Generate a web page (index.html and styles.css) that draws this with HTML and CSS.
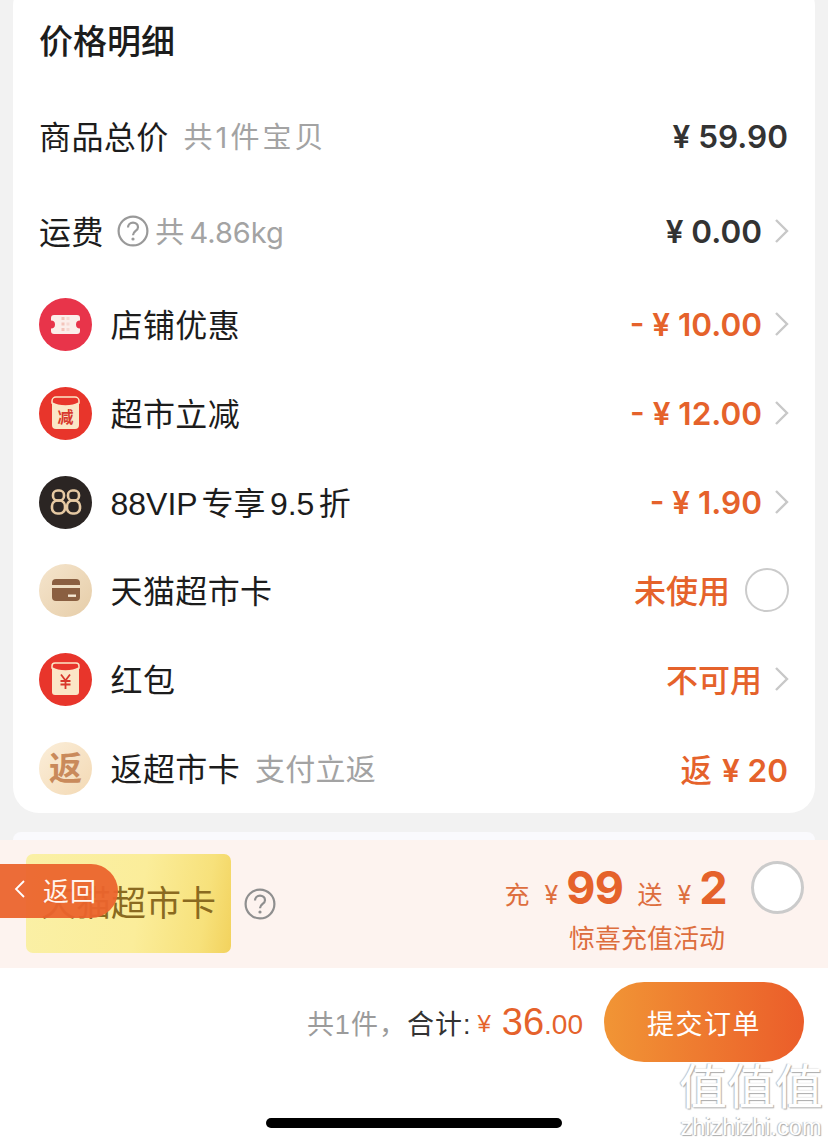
FILE: index.html
```html
<!DOCTYPE html>
<html lang="zh">
<head>
<meta charset="utf-8">
<title>价格明细</title>
<link rel="stylesheet" href="styles.css">
</head>
<body>
<div class="page">
  <section class="card">
    <h2 class="title">价格明细</h2>
    <div class="row row-plain r1">
      <div class="left"><span class="label">商品总价</span><span class="note n1">共1件宝贝</span></div>
      <div class="right"><span class="price dark">¥ 59.90</span></div>
    </div>
    <div class="row row-plain r2">
      <div class="left"><span class="label">运费</span>
        <svg class="help" viewBox="0 0 32 32"><circle cx="16" cy="16" r="14.4" fill="none" stroke="#999" stroke-width="2.2"/><path d="M11 12.6c0-3 2.2-5 5-5s5 2 5 4.6c0 3.8-5 3.8-5 8" fill="none" stroke="#999" stroke-width="2.2"/><circle cx="16" cy="24" r="1.6" fill="#999"/></svg>
        <span class="note n2">共 4.86kg</span></div>
      <div class="right"><span class="price dark">¥ 0.00</span><svg class="chev" viewBox="0 0 16 26"><path d="M2 2l11 11L2 24" fill="none" stroke="#c8c8c8" stroke-width="2.4"/></svg></div>
    </div>
    <div class="row r3">
      <div class="left">
        <svg class="icon" viewBox="0 0 53 53"><circle cx="26.5" cy="26.5" r="26.5" fill="#e8344a"/><path d="M15 17h23a3 3 0 0 1 3 3v2.500a4 4 0 0 0 0 8V33a3 3 0 0 1-3 3H15a3 3 0 0 1-3-3v-2.500a4 4 0 0 0 0-8V20a3 3 0 0 1 3-3z" fill="#fbeeea"/><path d="M24 19v15" stroke="#f3c4ba" stroke-width="3" stroke-dasharray="3 2.500"/><path d="M29 19v15" stroke="#f6d8d2" stroke-width="3" stroke-dasharray="3 2.500"/></svg>
        <span class="label lg">店铺优惠</span></div>
      <div class="right"><span class="price orange">- ¥ 10.00</span><svg class="chev" viewBox="0 0 16 26"><path d="M2 2l11 11L2 24" fill="none" stroke="#c8c8c8" stroke-width="2.4"/></svg></div>
    </div>
    <div class="row r4">
      <div class="left">
        <svg class="icon" viewBox="0 0 53 53"><circle cx="26.5" cy="26.5" r="26.5" fill="#e8352b"/><rect x="13" y="10" width="27" height="32" rx="4" fill="#fbe6c6"/><path d="M13 14a4 4 0 0 1 4-4h19a4 4 0 0 1 4 4v2c-7 4-20 4-27 0z" fill="#e8352b" stroke="#fbe6c6" stroke-width="1.500"/><text x="26.500" y="36" class="jian">减</text></svg>
        <span class="label lg">超市立减</span></div>
      <div class="right"><span class="price orange">- ¥ 12.00</span><svg class="chev" viewBox="0 0 16 26"><path d="M2 2l11 11L2 24" fill="none" stroke="#c8c8c8" stroke-width="2.4"/></svg></div>
    </div>
    <div class="row r5">
      <div class="left">
        <svg class="icon" viewBox="0 0 53 53"><circle cx="26.5" cy="26.5" r="26.5" fill="#2b2523"/><g fill="none" stroke="#e6c9a2" stroke-width="2.600"><rect x="14" y="14.500" width="11" height="10" rx="4.500"/><rect x="13" y="24.500" width="13" height="13" rx="5.500"/><rect x="29" y="14.500" width="11" height="10" rx="4.500"/><rect x="28" y="24.500" width="13" height="13" rx="5.500"/></g></svg>
        <span class="label lg lg-vip">88VIP 专享 9.5 折</span></div>
      <div class="right"><span class="price orange">- ¥ 1.90</span><svg class="chev" viewBox="0 0 16 26"><path d="M2 2l11 11L2 24" fill="none" stroke="#c8c8c8" stroke-width="2.4"/></svg></div>
    </div>
    <div class="row r6">
      <div class="left">
        <svg class="icon" viewBox="0 0 53 53"><defs><linearGradient id="g1" x1="0" y1="0" x2="1" y2="1"><stop offset="0" stop-color="#f5e5cd"/><stop offset="1" stop-color="#e6cda8"/></linearGradient><linearGradient id="g2" x1="0" y1="0" x2="1" y2="1"><stop offset="0" stop-color="#fbeed9"/><stop offset="1" stop-color="#f3d9b4"/></linearGradient></defs><circle cx="26.5" cy="26.5" r="26.5" fill="url(#g1)"/><rect x="13" y="15" width="28" height="22" rx="4" fill="#8a5f41"/><rect x="13" y="21" width="28" height="3" fill="#f0dfc4"/><rect x="29" y="30.500" width="8" height="2.400" fill="#f5e8d4"/></svg>
        <span class="label lg">天猫超市卡</span></div>
      <div class="right"><span class="status">未使用</span><span class="radio radio-card"></span></div>
    </div>
    <div class="row r7">
      <div class="left">
        <svg class="icon" viewBox="0 0 53 53"><circle cx="26.5" cy="26.5" r="26.5" fill="#e8352b"/><rect x="13" y="10" width="27" height="32" rx="3" fill="#fbe6c6"/><path d="M13 13a3 3 0 0 1 3-3h21a3 3 0 0 1 3 3v2c-7 4-20 4-27 0z" fill="#e8352b" stroke="#fbe6c6" stroke-width="1.500"/><path d="M22 21.500l4.500 6 4.500-6M21.500 28h10M21.500 31.500h10M26.500 27.500V36" fill="none" stroke="#d8382c" stroke-width="1.800"/></svg>
        <span class="label lg">红包</span></div>
      <div class="right"><span class="status">不可用</span><svg class="chev" viewBox="0 0 16 26"><path d="M2 2l11 11L2 24" fill="none" stroke="#c8c8c8" stroke-width="2.4"/></svg></div>
    </div>
    <div class="row r8">
      <div class="left">
        <svg class="icon" viewBox="0 0 53 53"><circle cx="26.5" cy="26.5" r="26.5" fill="url(#g2)"/><text x="26.500" y="38" class="fan">返</text></svg>
        <span class="label lg">返超市卡</span><span class="note n3">支付立返</span></div>
      <div class="right"><span class="price orange"><span class="fan-word">返</span> ¥ 20</span></div>
    </div>
  </section>

  <div class="second-card"></div>

  <section class="banner">
    <div class="gold"><span class="gold-text">天猫超市卡</span></div>
    <svg class="help help-b" viewBox="0 0 32 32"><circle cx="16" cy="16" r="14.400" fill="none" stroke="#8f8f8f" stroke-width="2.200"/><path d="M11 12.600c0-3 2.200-5 5-5s5 2 5 4.600c0 3.800-5 3.800-5 8" fill="none" stroke="#8f8f8f" stroke-width="2.200"/><circle cx="16" cy="24" r="1.600" fill="#8f8f8f"/></svg>
    <div class="offer">
      <div class="offer-main"><span class="small">充</span><span class="small yen">¥</span><b class="big">99</b><span class="small song">送</span><span class="small yen">¥</span><b class="big">2</b></div>
      <div class="offer-sub">惊喜充值活动</div>
    </div>
    <span class="radio radio-b"></span>
  </section>

  <footer class="footer">
    <div class="sum">
      <span class="count">共1件，</span><span class="total">合计:</span><span class="yen-s">¥</span><span class="int">36</span><span class="dec">.00</span>
      <button class="submit">提交订单</button>
    </div>
    <div class="home"></div>
  </footer>

  <div class="back"><svg class="back-arrow" viewBox="0 0 12 20"><path d="M10 2L2 10l8 8" fill="none" stroke="#fff" stroke-width="1.800"/></svg><span>返回</span></div>
  <div class="mark"><div class="mark-cn">值值值</div><div class="mark-en">zhizhizhi.com</div></div>
</div>
</body>
</html>
```
FILE: styles.css
```css
* { box-sizing: border-box; }
html, body { margin: 0; padding: 0; }
body { width: 828px; height: 1144px; overflow: hidden; background: #f2f2f2; font-family: "Liberation Sans", "Noto Sans CJK SC", sans-serif; color: #1c1c1c; }
.page { position: relative; width: 828px; height: 1144px; overflow: hidden; }

.card { margin: -20px 13px 0; height: 833px; background: #fff; border-radius: 26px; padding: 38px 27px 0 26px; }
.title { margin: 0; font-size: 34px; line-height: 48px; font-weight: 500; height: 50px; }
.row { display: flex; align-items: center; justify-content: space-between; height: 54px; }
.r1 { margin-top: 41px; }
.r2 { margin-top: 41px; }
.r3 { margin-top: 39px; }
.r4, .r5, .r7, .r8 { margin-top: 35px; }
.r6 { margin-top: 34px; }
.left { display: flex; align-items: center; }
.right { display: flex; align-items: center; }
.label { font-size: 32px; letter-spacing: .4px; white-space: nowrap; margin-bottom: 2px; }
.label.lg { margin-left: 18.500px; }
.label.lg-vip { letter-spacing: 0; word-spacing: -4.500px; }
.note { color: #a3a3a3; font-family: "Inter", "Noto Sans CJK SC", sans-serif; font-size: 29px; letter-spacing: 3px; white-space: nowrap; margin-bottom: 2px; }
.n1 { margin-left: 15px; }
.n2 { margin-left: 6px; letter-spacing: 0; word-spacing: -3px; }
.n3 { margin-left: 15px; font-size: 30px; letter-spacing: .2px; }
.help { width: 32px; height: 32px; margin-left: 13.500px; }
.icon { width: 53px; height: 53px; flex: none; }
.price { font-family: "Inter", "Noto Sans CJK SC", sans-serif; font-size: 31.500px; font-weight: 600; white-space: nowrap; }
.fan-word { font-weight: 500; margin-right: 2px; }
.dark { color: #333; }
.orange { color: #e5622b; }
.status { color: #e5622b; font-size: 32px; font-weight: 500; margin-bottom: 2px; }
.chev { width: 16px; height: 26px; margin-left: 12px; margin-right: -2px; }
.radio { display: block; width: 44px; height: 44px; margin-left: 15px; border-radius: 50%; border: 2px solid #cbcbcb; background: #fff; }
.radio-card { margin-right: -1px; }
.jian { font-family: "Noto Sans CJK SC", sans-serif; font-size: 16px; font-weight: 700; fill: #d8382c; text-anchor: middle; }
.fan { font-family: "Noto Sans CJK SC", sans-serif; font-size: 33px; font-weight: 700; fill: #c98a5b; text-anchor: middle; }

.second-card { position: relative; margin: 19px 13px 0; height: 8px; background: #fafafd; border-radius: 20px 20px 0 0; }
.banner { display: flex; align-items: center; height: 128px; background: #fdf3ef; padding: 14px 24px 15px 26px; }
.gold { width: 205px; height: 99px; border-radius: 7px; background: linear-gradient(100deg, #faf0a6 0%, #fbed9a 55%, #f7e17b 85%, #f2d25d 100%); display: flex; align-items: center; justify-content: flex-end; padding: 0 15px 6px 0; }
.gold-text { color: #8a6a20; font-size: 35px; white-space: nowrap; }
.help-b { margin-left: 13px; }
.offer { margin-left: auto; display: flex; flex-direction: column; align-items: flex-end; color: #e5622b; margin-top: 8px; }
.offer-main { display: flex; align-items: baseline; height: 54px; white-space: nowrap; }
.small { font-size: 25px; color: #dd6e3e; }
.yen { margin-left: 15px; margin-right: 8px; font-family: "Inter", sans-serif; }
.song { margin-left: 14px; }
.big { font-family: "Inter", sans-serif; font-size: 45px; letter-spacing: -.6px; color: #e5622b; font-weight: 700; }
.offer-sub { font-size: 26px; color: #dd6e3e; margin: 4px 2px 0 0; }
.radio-b { width: 53px; height: 53px; margin-left: 24px; margin-top: -32px; border: 3px solid #cbcbcb; }

.footer { background: #fff; height: 176px; padding-top: 14px; position: relative; }
.sum { display: flex; align-items: center; justify-content: flex-end; height: 80px; padding-right: 24px; white-space: nowrap; }
.count { color: #9b9b9b; font-size: 27px; letter-spacing: 1px; }
.total { color: #333; font-size: 27px; letter-spacing: 1px; }
.yen-s { color: #e5622b; font-size: 24px; margin-left: 6px; margin-top: 4px; }
.int { color: #e5622b; font-size: 38px; margin-left: 11px; }
.dec { color: #e5622b; font-size: 28px; margin-top: 6px; }
.submit { width: 200px; height: 80px; margin-left: 21px; border: 0; border-radius: 40px; background: linear-gradient(90deg, #f19535, #eb5d2a); color: #fff; font: inherit; font-size: 27px; letter-spacing: 1.500px; }
.home { width: 296px; height: 10px; margin: 56px auto 0 266px; background: #000; border-radius: 5px; }

.back { position: absolute; left: 0; top: 864px; width: 118px; height: 54px; display: flex; align-items: center; padding: 0 0 4px 14px; background: rgba(235, 100, 45, .95); border-radius: 0 27px 27px 0; color: #fff5ee; font-size: 26px; letter-spacing: 1px; }
.back-arrow { width: 12px; height: 20px; margin-right: 17px; }
.mark { position: absolute; left: 678px; top: 1062px; width: 146px; color: #fff; text-shadow: 1px 1px 1px #aaa, -1px 0 1px #bbb; text-align: center; }
.mark-cn { font-size: 48px; line-height: 52px; white-space: nowrap; }
.mark-en { font-size: 23.500px; line-height: 26px; white-space: nowrap; }
```
